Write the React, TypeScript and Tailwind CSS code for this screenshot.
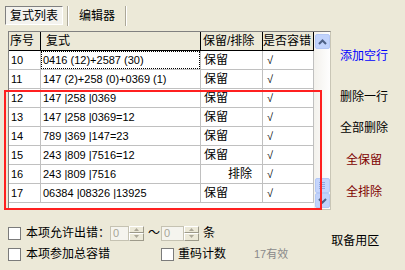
import React from "react";

const rows = [
  { no: "10", expr: "0416 (12)+2587 (30)", keep: "保留", excl: false, focus: true },
  { no: "11", expr: "147 (2)+258 (0)+0369 (1)", keep: "保留", excl: false },
  { no: "12", expr: "147 |258 |0369", keep: "保留", excl: false },
  { no: "13", expr: "147 |258 |0369=12", keep: "保留", excl: false },
  { no: "14", expr: "789 |369 |147=23", keep: "保留", excl: false },
  { no: "15", expr: "243 |809 |7516=12", keep: "保留", excl: false },
  { no: "16", expr: "243 |809 |7516", keep: "排除", excl: true },
  { no: "17", expr: "06384 |08326 |13925", keep: "保留", excl: false },
];

const Checkbox = () => (
  <div className="w-[13px] h-[13px] bg-white border border-[#7b7b7b] shrink-0" />
);

const Spinner = ({ width }: { width: string }) => (
  <div className="flex items-center shrink-0">
    <div className={`${width} h-[15px] border border-[#c5c2b2] bg-[#f5f4ee] text-[11px] leading-[13px] text-[#a8a697] pl-[2px]`}>0</div>
    <div className="flex flex-col w-[15px] h-[15px]">
      <div className="flex-1 bg-[#ece9d8] border border-t-white border-l-white border-b-[#9d9a8a] border-r-[#9d9a8a] flex items-center justify-center">
        <svg width="5" height="3" viewBox="0 0 5 3"><path d="M2.5 0 L5 3 L0 3 Z" fill="#aca899" /></svg>
      </div>
      <div className="flex-1 bg-[#ece9d8] border border-t-white border-l-white border-b-[#9d9a8a] border-r-[#9d9a8a] flex items-center justify-center">
        <svg width="5" height="3" viewBox="0 0 5 3"><path d="M0 0 L5 0 L2.5 3 Z" fill="#aca899" /></svg>
      </div>
    </div>
  </div>
);

const ScrollBtn = ({ up }: { up: boolean }) => (
  <div className="w-[15px] h-[15px] rounded-[2px] bg-[#c1d3fb] border border-[#b4c8f6] flex items-center justify-center">
    <svg width="9" height="6" viewBox="0 0 9 6">
      {up ? (
        <path d="M1 5 L4.5 1.5 L8 5" fill="none" stroke="#4d6185" strokeWidth="2" />
      ) : (
        <path d="M1 1 L4.5 4.5 L8 1" fill="none" stroke="#4d6185" strokeWidth="2" />
      )}
    </svg>
  </div>
);

export default function App() {
  return (
    <div className="relative w-[405px] h-[270px] overflow-hidden bg-[#ece9d8] text-[12px] text-black font-['Liberation_Sans','Noto_Sans_CJK_SC',sans-serif]">
      {/* tabs */}
      <div className="flex items-start h-[31px] pt-[6px] pl-[5px]">
        <div className="w-[58px] h-[19px] border border-t-[#808080] border-l-[#808080] border-b-white border-r-white bg-[#f4f3ee] flex items-center justify-center leading-none">
          复式列表
        </div>
        <div className="ml-[4px] w-[2px] h-[20px] border-l border-l-[#aca899] border-r border-r-white" />
        <div className="ml-[10px] h-[19px] flex items-center leading-none">编辑器</div>
        <div className="ml-[10px] w-[2px] h-[20px] border-l border-l-[#aca899] border-r border-r-white" />
      </div>

      {/* main */}
      <div className="flex pl-[8px]">
        <div className="w-[323px] h-[179px] border border-t-[#808080] border-l-[#808080] border-r-[#c9c6b6] border-b-[#c9c6b6] bg-white flex">
          <div className="w-[305px] flex flex-col">
            <div className="flex h-[19px] bg-[#ece9d8] border-b border-black leading-none">
              <div className="w-[32px] border-r border-black flex items-center pl-[1px]">序号</div>
              <div className="w-[160px] border-r border-black flex items-center pl-[5px]">复式</div>
              <div className="w-[62px] border-r border-black flex items-center pl-[2px]">保留/排除</div>
              <div className="w-[51px] border-r border-black flex items-center">是否容错</div>
            </div>
            {rows.map((r) => (
              <div key={r.no} className="flex h-[19px] border-b border-[#c0c0c0] text-[11px] leading-none">
                <div className="w-[32px] border-r border-[#c0c0c0] flex items-center pl-[2px]">{r.no}</div>
                <div className="w-[160px] border-r border-[#c0c0c0] flex items-stretch">
                  <div className={`flex-1 flex items-center pl-[1px] ${r.focus ? "border border-dotted border-black" : "border border-transparent"}`}>
                    {r.expr}
                  </div>
                </div>
                <div className={`w-[62px] border-r border-[#c0c0c0] flex items-center text-[12px] ${r.excl ? "pl-[27px]" : "pl-[3px]"}`}>
                  {r.keep}
                </div>
                <div className="w-[51px] border-r border-[#c0c0c0] flex items-center pl-[4px] text-[11px]">√</div>
              </div>
            ))}
          </div>
          <div className="w-[16px] bg-gradient-to-r from-[#f3f1ec] to-[#fefefe] flex flex-col items-center pt-[2px] pb-[1px]">
            <ScrollBtn up />
            <div className="flex-1" />
            <div className="w-[15px] h-[15px] rounded-[2px] bg-[#c5d5fc] border border-[#b4c8f6] flex flex-col items-center justify-center gap-[1px]">
              <div className="w-[6px] h-px bg-[#8ea7e0]" />
              <div className="w-[6px] h-px bg-[#8ea7e0]" />
              <div className="w-[6px] h-px bg-[#8ea7e0]" />
              <div className="w-[6px] h-px bg-[#8ea7e0]" />
            </div>
            <ScrollBtn up={false} />
          </div>
        </div>

        <div className="ml-[9px] flex flex-col leading-[14px]">
          <div className="mt-[18px] text-[#0000ff]">添加空行</div>
          <div className="mt-[27px]">删除一行</div>
          <div className="mt-[17px]">全部删除</div>
          <div className="mt-[18px] ml-[6px] text-[#800000]">全保留</div>
          <div className="mt-[18px] ml-[6px] text-[#800000]">全排除</div>
        </div>
      </div>

      {/* bottom */}
      <div className="flex">
        <div className="flex flex-col pl-[8px] pt-[15px]">
          <div className="flex items-center h-[16px] whitespace-nowrap">
            <Checkbox />
            <div className="ml-[5px] w-[84px] shrink-0 leading-none">本项允许出错：</div>
            <Spinner width="w-[19px]" />
            <div className="ml-[4px] w-[13px] leading-none">～</div>
            <Spinner width="w-[23px]" />
            <div className="ml-[4px] leading-none">条</div>
          </div>
          <div className="flex items-center h-[16px] mt-[5px] whitespace-nowrap">
            <Checkbox />
            <div className="ml-[5px] w-[135px] shrink-0 leading-none">本项参加总容错</div>
            <Checkbox />
            <div className="ml-[4px] w-[76px] shrink-0 leading-none">重码计数</div>
            <div className="leading-none text-[#8a8a8a] text-[11px]">17有效</div>
          </div>
        </div>
        <div className="ml-[43px] pt-[24px] leading-[14px] whitespace-nowrap">取备用区</div>
      </div>

      {/* red annotation frame */}
      <div className="absolute left-[4px] top-[90px] w-[318px] h-[120px] border-2 border-[#ff2020] pointer-events-none" />
    </div>
  );
}
